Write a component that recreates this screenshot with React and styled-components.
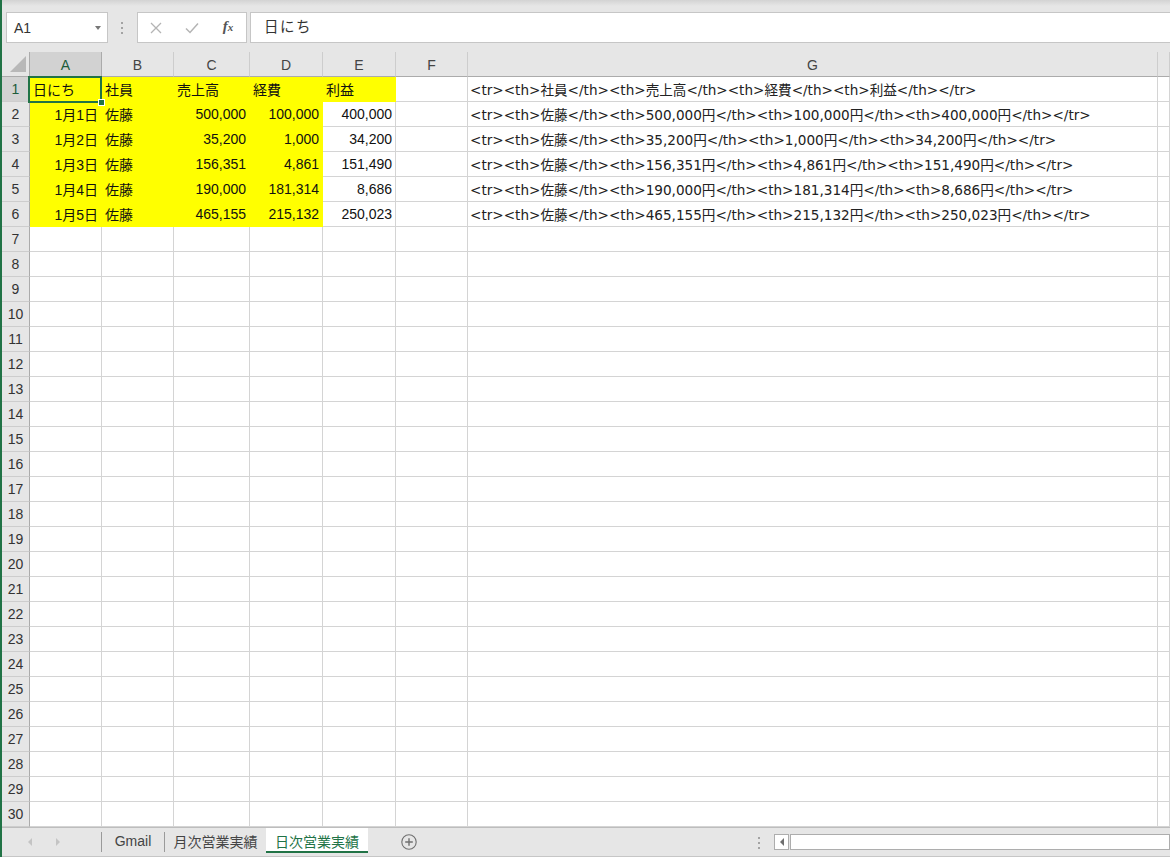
import React from 'react';
import styled, { createGlobalStyle } from 'styled-components';

// =================================
//       Data
// =================================

const COLS = ['A', 'B', 'C', 'D', 'E', 'F', 'G'];
const YELLOW = '#ffff00';
const GRID = '#d4d4d4';
const GREEN = '#217346';

const headerRow = ['日にち', '社員', '売上高', '経費', '利益'];
const dataRows = [
  ['1月1日', '佐藤', '500,000', '100,000', '400,000'],
  ['1月2日', '佐藤', '35,200', '1,000', '34,200'],
  ['1月3日', '佐藤', '156,351', '4,861', '151,490'],
  ['1月4日', '佐藤', '190,000', '181,314', '8,686'],
  ['1月5日', '佐藤', '465,155', '215,132', '250,023'],
];

const buildRows = () => {
  const rows = [];
  rows.push([
    ...headerRow.map((text) => ({ text, fill: YELLOW })),
    {},
    { text: '<tr><th>社員</th><th>売上高</th><th>経費</th><th>利益</th></tr>', code: true },
    {},
  ]);
  dataRows.forEach(([day, name, sales, cost, profit]) => {
    rows.push([
      { text: day, fill: YELLOW, right: true },
      { text: name, fill: YELLOW },
      { text: sales, fill: YELLOW, right: true },
      { text: cost, fill: YELLOW, right: true },
      { text: profit, right: true },
      {},
      {
        text: `<tr><th>${name}</th><th>${sales}円</th><th>${cost}円</th><th>${profit}円</th></tr>`,
        code: true,
      },
      {},
    ]);
  });
  while (rows.length < 30) rows.push([{}, {}, {}, {}, {}, {}, {}, {}]);
  return rows;
};

const App = () => {
  const rows = buildRows();

  return (
    <>
      <GlobalStyle />
      <Window>
        {/* formula bar */}
        <Toolbar>
          <NameBox>
            A1
            <DropCaret />
          </NameBox>
          <Grip>
            <GripDot />
            <GripDot />
            <GripDot />
          </Grip>
          <FxBox>
            <FxButton>
              <svg width="12" height="12" viewBox="0 0 12 12">
                <path d="M1 1 L11 11 M11 1 L1 11" stroke="#b4b4b4" strokeWidth="1.3" fill="none" />
              </svg>
            </FxButton>
            <FxButton>
              <svg width="14" height="12" viewBox="0 0 14 12">
                <path d="M1 6.5 L5 10.5 L13 1.5" stroke="#b4b4b4" strokeWidth="1.5" fill="none" />
              </svg>
            </FxButton>
            <FxButton>
              <FxLabel>
                f<small>x</small>
              </FxLabel>
            </FxButton>
          </FxBox>
          <FormulaInput>日にち</FormulaInput>
        </Toolbar>

        {/* sheet */}
        <Sheet>
          <Grid>
            <Corner>
              <svg width="16" height="16" viewBox="0 0 16 16">
                <path d="M16 0 L16 16 L0 16 Z" fill="#b8b8b8" />
              </svg>
            </Corner>
            {COLS.map((c) => (
              <ColHead key={c} $selected={c === 'A'}>
                {c}
              </ColHead>
            ))}
            <ColHead />

            {rows.map((cells, r) => (
              <React.Fragment key={r}>
                <RowHead $selected={r === 0}>{r + 1}</RowHead>
                {cells.map((cell, c) => (
                  <Cell
                    key={c}
                    $fill={cell.fill}
                    $right={cell.right}
                    $code={cell.code}
                    $active={r === 0 && c === 0}
                  >
                    {cell.text}
                    {r === 0 && c === 0 && <FillHandle />}
                  </Cell>
                ))}
              </React.Fragment>
            ))}
          </Grid>
        </Sheet>

        {/* sheet tabs */}
        <TabBar>
          <NavArea>
            <NavArrow $dir="left" />
            <NavArrow $dir="right" />
          </NavArea>
          <TabDivider />
          <Tab $w={62}>Gmail</Tab>
          <TabDivider />
          <Tab $w={101}>月次営業実績</Tab>
          <Tab $w={102} $active>
            日次営業実績
          </Tab>
          <AddSheet>
            <svg width="16" height="16" viewBox="0 0 16 16">
              <circle cx="8" cy="8" r="7.2" stroke="#707070" strokeWidth="1.1" fill="none" />
              <path d="M8 4.2 V11.8 M4.2 8 H11.8" stroke="#707070" strokeWidth="1.4" />
            </svg>
          </AddSheet>
          <BottomGrip>
            <GripDot />
            <GripDot />
            <GripDot />
          </BottomGrip>
          <HScroll>
            <ScrollButton>
              <ScrollArrow />
            </ScrollButton>
            <ScrollTrack />
          </HScroll>
        </TabBar>
      </Window>
    </>
  );
};

// =================================
//       Styled-Component
// =================================

const GlobalStyle = createGlobalStyle`
  html, body {
    margin: 0;
    padding: 0;
  }
  body {
    background: #e6e6e6;
    font-family: "Liberation Sans", "Noto Sans CJK JP", sans-serif;
    overflow: hidden;
  }
  * {
    box-sizing: border-box;
  }
`;

const Window = styled.div`
  width: 1170px;
  height: 857px;
  display: flex;
  flex-direction: column;
  border-left: 2px solid ${GREEN};
  background: #e6e6e6;
  overflow: hidden;
`;

const Toolbar = styled.div`
  height: 52px;
  flex-shrink: 0;
  display: flex;
  align-items: flex-start;
  padding: 12px 0 0 4px;
  background: linear-gradient(to bottom, #d3d3d3 0, #e0e0e0 4px, #e6e6e6 6px);
`;

const BoxBase = styled.div`
  height: 31px;
  background: #fff;
  border: 1px solid #c6c6c6;
`;

const NameBox = styled(BoxBase)`
  width: 102px;
  position: relative;
  display: flex;
  align-items: center;
  padding: 1px 0 0 7px;
  font-size: 14px;
  color: #333;
`;

const DropCaret = styled.span`
  position: absolute;
  right: 6px;
  top: 13px;
  border-left: 3.5px solid transparent;
  border-right: 3.5px solid transparent;
  border-top: 4px solid #777;
`;

const Grip = styled.div`
  display: flex;
  flex-direction: column;
  gap: 3px;
  margin: 10px 14px 0 13px;
`;

const GripDot = styled.span`
  width: 2px;
  height: 2px;
  background: #a3a3a3;
`;

const FxBox = styled(BoxBase)`
  width: 110px;
  display: flex;
  margin-right: 3px;
`;

const FxButton = styled.div`
  width: 36px;
  display: flex;
  align-items: center;
  justify-content: center;
`;

const FxLabel = styled.span`
  font-family: "Liberation Serif", "DejaVu Serif", serif;
  font-style: italic;
  font-weight: bold;
  font-size: 15px;
  color: #555;
  margin-top: -3px;
  small {
    font-size: 11px;
  }
`;

const FormulaInput = styled(BoxBase)`
  flex: 1;
  border-right: none;
  display: flex;
  align-items: center;
  padding: 0 0 4px 13px;
  font-family: "Noto Sans CJK JP", sans-serif;
  font-size: 14.5px;
  letter-spacing: 1.5px;
  color: #333;
`;

const Sheet = styled.div`
  flex: 1;
  background: #fff;
  overflow: hidden;
`;

const Grid = styled.div`
  display: grid;
  grid-template-columns: 28px 72px 72px 76px 73px 73px 72px 690px 1fr;
  grid-auto-rows: 25px;
`;

const HeadBase = styled.div`
  display: flex;
  align-items: center;
  justify-content: center;
  font-size: 14px;
  background: ${(p) => (p.$selected ? '#d2d2d2' : '#e6e6e6')};
`;

const Corner = styled(HeadBase)`
  border-right: 1px solid #ababab;
  border-bottom: 1px solid #ababab;
  align-items: flex-end;
  justify-content: flex-end;
  padding: 0 3px 4px 0;
`;

const ColHead = styled(HeadBase)`
  border-bottom: 1px solid #ababab;
  border-right: 1px solid ${(p) => (p.$selected ? '#ababab' : '#cdcdcd')};
  color: ${(p) => (p.$selected ? '#1d5c3a' : '#444')};
  padding-top: 1px;
`;

const RowHead = styled(HeadBase)`
  border-right: 1px solid #ababab;
  border-bottom: 1px solid #cdcdcd;
  color: ${(p) => (p.$selected ? '#1d5c3a' : '#333')};
`;

const Cell = styled.div`
  position: relative;
  display: flex;
  align-items: center;
  justify-content: ${(p) => (p.$right ? 'flex-end' : 'flex-start')};
  padding: 0 3px 1px 3px;
  background: ${(p) => p.$fill || '#fff'};
  border-right: 1px solid ${(p) => p.$fill || GRID};
  border-bottom: 1px solid ${(p) => p.$fill || GRID};
  white-space: nowrap;
  color: #111;
  font-family: ${(p) =>
    p.$code
      ? '"DejaVu Sans", "Noto Sans CJK JP", sans-serif'
      : '"Liberation Sans", "Noto Sans CJK JP", sans-serif'};
  font-size: ${(p) => (p.$code ? '13.6px' : '14px')};
  ${(p) => p.$code && 'padding-left: 2px; color: #222;'}
  ${(p) =>
    p.$active &&
    `
    z-index: 2;
    &::after {
      content: '';
      position: absolute;
      top: -1px;
      left: -2px;
      right: -1px;
      bottom: -2px;
      border: 2px solid ${GREEN};
      pointer-events: none;
    }
  `}
`;

const FillHandle = styled.span`
  position: absolute;
  right: -4px;
  bottom: -5px;
  width: 7px;
  height: 7px;
  background: ${GREEN};
  border: 1px solid #fff;
  z-index: 3;
`;

const TabBar = styled.div`
  height: 30px;
  flex-shrink: 0;
  display: flex;
  align-items: flex-start;
  border-top: 1px solid #bdbdbd;
  border-bottom: 1px solid #c6c6c6;
  background: #e6e6e6;
`;

const NavArea = styled.div`
  width: 99px;
  height: 28px;
  display: flex;
  align-items: center;
  gap: 24px;
  padding: 0 0 0 26px;
`;

const NavArrow = styled.span`
  width: 0;
  height: 0;
  border-top: 4px solid transparent;
  border-bottom: 4px solid transparent;
  ${(p) =>
    p.$dir === 'left'
      ? 'border-right: 4px solid #c4c4c4;'
      : 'border-left: 4px solid #c4c4c4;'}
`;

const TabDivider = styled.span`
  width: 1px;
  height: 20px;
  margin-top: 4px;
  background: #9a9a9a;
  flex-shrink: 0;
`;

const Tab = styled.div`
  width: ${(p) => p.$w}px;
  height: 25px;
  flex-shrink: 0;
  display: flex;
  align-items: center;
  justify-content: center;
  padding-top: 3px;
  font-size: 14px;
  color: ${(p) => (p.$active ? GREEN : '#444')};
  background: ${(p) => (p.$active ? '#fff' : 'transparent')};
  border-bottom: 2px solid ${(p) => (p.$active ? GREEN : 'transparent')};
`;

const AddSheet = styled.div`
  margin: 6px 0 0 33px;
  height: 16px;
  display: flex;
`;

const BottomGrip = styled(Grip)`
  margin: 9px 14px 0 auto;
`;

const HScroll = styled.div`
  width: 396px;
  height: 16px;
  margin-top: 6px;
  display: flex;
  gap: 1px;
`;

const ScrollButton = styled.div`
  width: 15px;
  background: #fff;
  border: 1px solid #adadad;
  display: flex;
  align-items: center;
  justify-content: center;
`;

const ScrollArrow = styled.span`
  width: 0;
  height: 0;
  border-top: 4px solid transparent;
  border-bottom: 4px solid transparent;
  border-right: 4px solid #6f6f6f;
`;

const ScrollTrack = styled.div`
  flex: 1;
  background: #fff;
  border: 1px solid #adadad;
`;

export default App;
